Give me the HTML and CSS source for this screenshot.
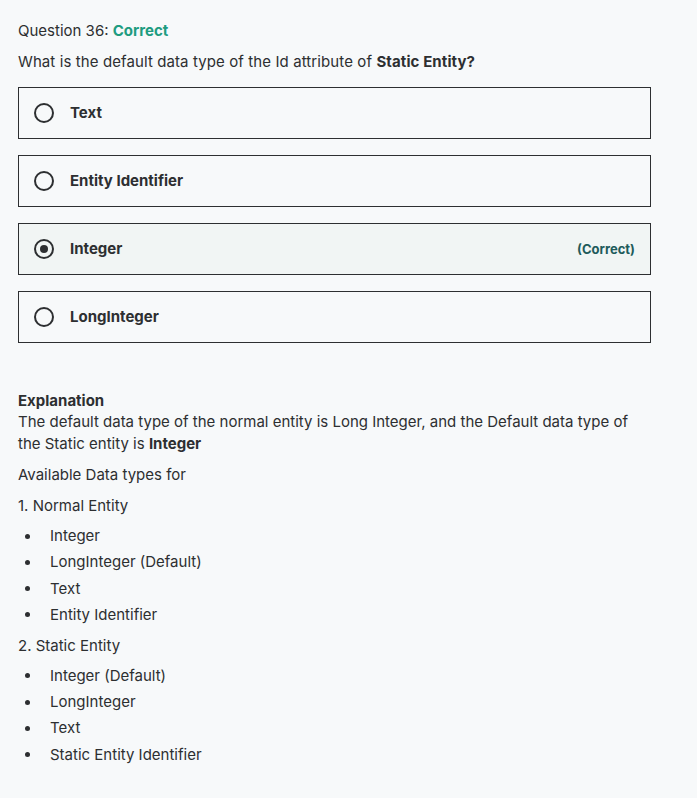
FILE: index.html
```html
<!DOCTYPE html>
<html>
<head>
<meta charset="utf-8">
<link rel="stylesheet" href="styles.css">
</head>
<body>
<div class="page">
  <div class="q-head">Question 36: <span class="status">Correct</span></div>
  <div class="q-text">What is the default data type of the Id attribute of <b>Static Entity?</b></div>
  <ul class="options">
    <li class="option"><span class="radio"></span><span class="label">Text</span></li>
    <li class="option"><span class="radio"></span><span class="label">Entity Identifier</span></li>
    <li class="option selected"><span class="radio"><span class="dot"></span></span><span class="label">Integer</span><span class="tag">(Correct)</span></li>
    <li class="option"><span class="radio"></span><span class="label">LongInteger</span></li>
  </ul>
  <div class="explanation">
    <div class="ex-title">Explanation</div>
    <p class="ex-p">The default data type of the normal entity is Long Integer, and the Default data type of the Static entity is <b>Integer</b></p>
    <p class="ex-p">Available Data types for</p>
    <p class="ex-p">1. Normal Entity</p>
    <ul class="bullets">
      <li>Integer</li>
      <li>LongInteger (Default)</li>
      <li>Text</li>
      <li>Entity Identifier</li>
    </ul>
    <p class="ex-p">2. Static Entity</p>
    <ul class="bullets">
      <li>Integer (Default)</li>
      <li>LongInteger</li>
      <li>Text</li>
      <li>Static Entity Identifier</li>
    </ul>
  </div>
</div>
</body>
</html>
```
FILE: styles.css
```css
html, body {
  margin: 0;
  padding: 0;
  background: #f7f9fa;
}
body {
  font-family: "Inter", "Noto Sans", sans-serif;
  color: #2d2f31;
  font-size: 15px;
  line-height: 22px;
}
.page {
  padding: 20px 0 0 18px;
  width: 633px;
}
.q-head {
  height: 22px;
}
.status {
  color: #1e9c80;
  font-weight: 700;
}
.q-text {
  margin-top: 9px;
  letter-spacing: 0.1px;
}
.q-text b { font-weight: 700; }
.options {
  list-style: none;
  margin: 14px 0 0;
  padding: 0;
  display: flex;
  flex-direction: column;
  gap: 16px;
}
.option {
  box-sizing: border-box;
  height: 52px;
  border: 1px solid #2d2f31;
  display: flex;
  align-items: center;
  padding: 0 15px 0 15px;
  font-weight: 700;
}
.option.selected {
  background: #f1f5f4;
}
.radio {
  box-sizing: border-box;
  width: 20px;
  height: 20px;
  border: 2px solid #2d2f31;
  border-radius: 50%;
  display: flex;
  align-items: center;
  justify-content: center;
  margin-right: 16px;
  flex: none;
}
.dot {
  width: 8px;
  height: 8px;
  border-radius: 50%;
  background: #2d2f31;
}
.label { flex: 1; }
.tag {
  color: #1e5b5b;
  font-size: 13px;
  font-weight: 700;
}
.explanation {
  margin-top: 47px;
}
.ex-title {
  font-weight: 700;
  line-height: 21px;
}
.ex-p {
  margin: 0 0 9px;
}
.bullets {
  list-style: none;
  margin: -1px 0 9px;
  padding: 0;
}
.bullets li {
  display: flex;
  align-items: center;
  line-height: 22px;
  margin-bottom: 4.3px;
}
.bullets li::before {
  content: "";
  width: 5px;
  height: 5px;
  border-radius: 50%;
  background: #2d2f31;
  margin-left: 7px;
  margin-right: 20px;
  flex: none;
}
```
